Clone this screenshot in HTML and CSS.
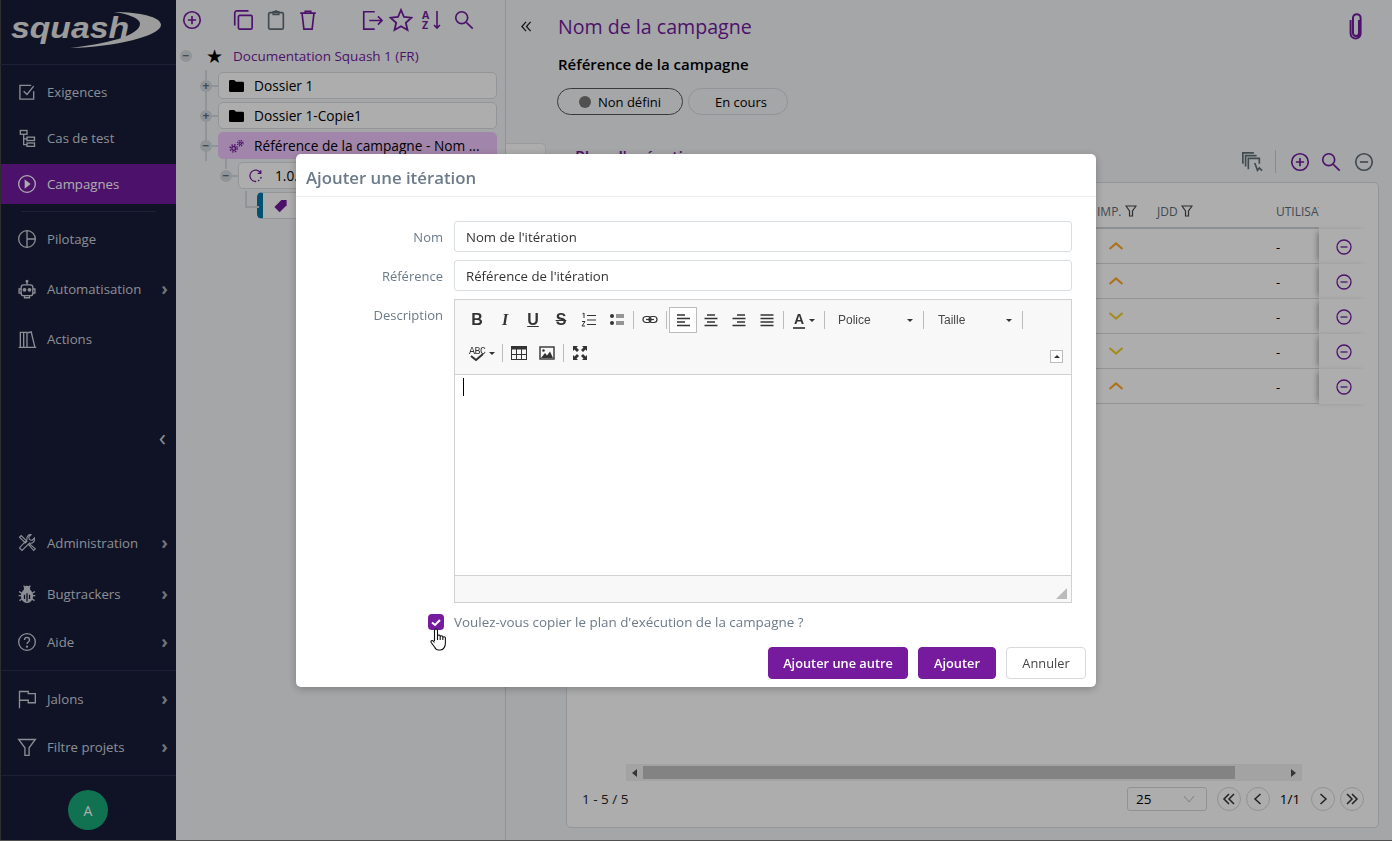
FILE: index.html
```html
<!DOCTYPE html>
<html lang="fr">
  <head>
    <meta charset="UTF-8" />
    <title>Squash - Campagnes</title>
    <meta name="viewport" content="width=device-width, initial-scale=1.0" />
    <link rel="stylesheet" href="styles.css">
  </head>
  <body>
    <div class="app">
      <!-- Main navigation -->
      <aside class="sidebar">
        <div class="logo">
          <svg width="176" height="64" viewBox="0 0 176 64">
            <path d="M114 12C140 12 161 17 161 25C161 36 115 47 70 48C105 44 141 36 140 23C139 18 128 14 114 12Z" fill="#e6e6e6"/>
            <text x="11" y="38" textLength="118" lengthAdjust="spacingAndGlyphs" class="logo-text">squash</text>
          </svg>
        </div>
        <nav class="nav-top">
          <a class="nav-item">
            <svg class="nav-icon" viewBox="0 0 24 24"><path d="M20 11v9.500H3.500V4H17"/><path d="M8 11l4 4 8-10"/></svg>
            <span>Exigences</span>
          </a>
          <a class="nav-item">
            <svg class="nav-icon" viewBox="0 0 24 24"><rect x="4" y="3" width="8" height="4.500"/><rect x="12" y="11" width="9" height="4"/><rect x="12" y="18" width="9" height="4"/><path d="M8 7.500V20h4M8 13h4"/></svg>
            <span>Cas de test</span>
          </a>
          <a class="nav-item active">
            <svg class="nav-icon" viewBox="0 0 24 24"><circle cx="12" cy="12" r="10"/><path d="M10 8l5 4-5 4z" fill="currentColor"/></svg>
            <span>Campagnes</span>
          </a>
          <div class="nav-divider"></div>
          <a class="nav-item wide">
            <svg class="nav-icon" viewBox="0 0 24 24"><circle cx="12" cy="12" r="10"/><path d="M12 2V22M12 12H22"/></svg>
            <span>Pilotage</span>
          </a>
          <a class="nav-item wide">
            <svg class="nav-icon" viewBox="0 0 24 24"><path d="M12 2v5"/><circle cx="12" cy="2.800" r="1"/><rect x="5" y="7" width="14" height="13" rx="3"/><path d="M5 12H2.500v5H5M19 12h2.500v5H19M9 20v2.500h6V20"/><circle cx="9" cy="13" r="1.500" fill="currentColor"/><circle cx="15" cy="13" r="1.500" fill="currentColor"/></svg>
            <span>Automatisation</span>
            <span class="nav-arrow">›</span>
          </a>
          <a class="nav-item wide">
            <svg class="nav-icon" viewBox="0 0 24 24"><path d="M2 22h21M4 22V4h4v18M8 22V4h4v18M13 4.500l4-1 4.500 18.500"/></svg>
            <span>Actions</span>
          </a>
        </nav>
        <div class="nav-spacer"><span class="nav-collapse">‹</span></div>
        <nav class="nav-bottom">
          <a class="nav-item">
            <svg class="nav-icon thin" viewBox="0 0 24 24"><path d="M3 5l2-2 7 7-2 2zM14 14l6 7 2-2-7-6M21 6l-3 3-3-1-1-3 3-3c-3-.5-6 2-5 6L3 18l3 3 9-9c4 1 6.500-2 6-6z"/></svg>
            <span>Administration</span>
            <span class="nav-arrow">›</span>
          </a>
          <a class="nav-item bug-item">
            <svg class="nav-icon" viewBox="0 0 24 24"><path d="M8 2l2 3M16 2l-2 3M2.500 9l3 2M21.500 9l-3 2M2 14h3.500M22 14h-3.500M3 20l3-2M21 20l-3-2"/><path d="M8 8h8c2 2 2.500 4 2.500 6 0 5-3 8-6.500 8s-6.500-3-6.500-8c0-2 .5-4 2.500-6z" fill="currentColor"/><path d="M12 11v10M9 13v5M15 13v5" stroke="#181d38"/><circle cx="12" cy="6" r="3" fill="currentColor"/></svg>
            <span>Bugtrackers</span>
            <span class="nav-arrow">›</span>
          </a>
          <a class="nav-item aide-item">
            <svg class="nav-icon" viewBox="0 0 24 24"><circle cx="12" cy="12" r="10"/><path d="M9 9.500c0-4 6-4 6 0 0 2.500-3 2.500-3 5"/><circle cx="12" cy="17.500" r=".6"/></svg>
            <span>Aide</span>
            <span class="nav-arrow">›</span>
          </a>
          <div class="nav-line"></div>
          <a class="nav-item">
            <svg class="nav-icon" viewBox="0 0 24 24"><path d="M3 23V3h10.500v2.500H22v11h-8.500v-3H3"/></svg>
            <span>Jalons</span>
            <span class="nav-arrow">›</span>
          </a>
          <a class="nav-item">
            <svg class="nav-icon" viewBox="0 0 24 24"><path d="M2 3h20l-7.500 10v9h-5V13z"/></svg>
            <span>Filtre projets</span>
            <span class="nav-arrow">›</span>
          </a>
          <div class="nav-line last"></div>
        </nav>
        <div class="user-box"><div class="avatar">A</div></div>
      </aside>

      <!-- Campaign tree -->
      <section class="tree-panel">
        <div class="tree-toolbar">
          <svg class="tool-icon first" viewBox="0 0 24 24"><circle cx="12" cy="12" r="9"/><path d="M12 7.500v9M7.500 12h9"/></svg>
          <svg class="tool-icon copy" viewBox="0 0 24 24"><rect x="7" y="7" width="15" height="15" rx="1.500"/><path d="M3 18V4.500C3 3 4 2 5.500 2H18"/></svg>
          <svg class="tool-icon gray paste" viewBox="0 0 24 24"><rect x="4" y="4" width="16" height="18" rx="1.500"/><path d="M9 6V3h2a1 1 0 0 1 2 0h2v3z"/></svg>
          <svg class="tool-icon trash" viewBox="0 0 24 24"><path d="M3.500 4.500h17M5.500 4.500L7.500 22h9l2-17.500M9 4.500V2.500h6v2"/></svg>
          <svg class="tool-icon export" viewBox="0 0 24 24"><path d="M15 3H3v19h12M9 12.500h14M18.500 8l4.500 4.500-4.500 4.500"/></svg>
          <svg class="tool-icon star" viewBox="0 0 24 24"><path d="M12 2l3 7 7.500.7-5.700 5 1.700 7.300L12 18.200 5.500 22l1.700-7.300-5.700-5L9 9z"/></svg>
          <div class="sort-icon">
            <span class="sort-letters">A<br>Z</span>
            <svg viewBox="0 0 8 20" width="8" height="20"><path d="M4 1v17M1 15l3 3 3-3"/></svg>
          </div>
          <svg class="tool-icon search" viewBox="0 0 24 24"><circle cx="9.500" cy="9.500" r="6.500"/><path d="M14.500 14.500l7 7"/></svg>
        </div>

        <div class="tree">
          <div class="tree-root">
            <span class="toggle">−</span>
            <span class="root-star">★</span>
            <span class="root-name">Documentation Squash 1 (FR)</span>
          </div>
          <div class="tree-row level-1">
            <span class="toggle">+</span>
            <div class="node">
              <svg class="node-icon" viewBox="0 0 16 14"><path d="M0 2a1.500 1.500 0 0 1 1.500-1.500h4L7.500 2.500h7A1.500 1.500 0 0 1 16 4v8a1.500 1.500 0 0 1-1.500 1.500h-13A1.500 1.500 0 0 1 0 12z" fill="#000"/></svg>
              <span class="node-name">Dossier 1</span>
            </div>
          </div>
          <div class="tree-row level-1">
            <span class="toggle">+</span>
            <div class="node">
              <svg class="node-icon" viewBox="0 0 16 14"><path d="M0 2a1.500 1.500 0 0 1 1.500-1.500h4L7.500 2.500h7A1.500 1.500 0 0 1 16 4v8a1.500 1.500 0 0 1-1.500 1.500h-13A1.500 1.500 0 0 1 0 12z" fill="#000"/></svg>
              <span class="node-name">Dossier 1-Copie1</span>
            </div>
          </div>
          <div class="tree-row level-1">
            <span class="toggle">−</span>
            <div class="node selected">
              <svg class="node-icon" viewBox="0 0 16 14" fill="none" stroke="#711a9d"><circle cx="5" cy="9.500" r="2" stroke-width="1.400"/><circle cx="5" cy="9.500" r="3.800" stroke-dasharray="1.500 1.500" stroke-width="1.600"/><circle cx="12" cy="4" r="1.300" stroke-width="1.200"/><circle cx="12" cy="4" r="2.900" stroke-dasharray="1.200 1.100" stroke-width="1.400"/></svg>
              <span class="node-name">Référence de la campagne - Nom ...</span>
            </div>
          </div>
          <div class="tree-row level-2">
            <span class="toggle">−</span>
            <div class="node">
              <svg class="node-icon iter" viewBox="0 0 16 16" fill="none" stroke="#711a9d" stroke-width="1.500"><path d="M14 5A6.500 6.500 0 1 0 14.500 9" stroke-dasharray="28 2 2 2"/><path d="M14 1.500V5h-3.500"/></svg>
              <span class="node-name">1.0.0 - Itération 1</span>
            </div>
          </div>
          <div class="tree-row level-3">
            <div class="node suite">
              <svg class="node-icon tag" viewBox="0 0 16 16"><path d="M9 1h6v6l-8 8-6-6z" fill="#711a9d"/></svg>
              <span class="node-name">Suite de test</span>
            </div>
          </div>
        </div>
      </section>

      <!-- Campaign content -->
      <main class="main">
        <div class="main-head">
          <svg class="back-arrows" viewBox="0 0 12 12"><path d="M5.500 1L1 6l4.500 5M10.500 1L6 6l4.500 5"/></svg>
          <h1 class="camp-title">Nom de la campagne</h1>
          <svg class="clip-icon" viewBox="0 0 16 28"><path d="M11 8v13a3 3 0 0 1-6 0V6a3.800 3.800 0 0 1 7.600 0v15.500a5 5 0 0 1-10 0V8"/></svg>
        </div>
        <div class="camp-ref">Référence de la campagne</div>
        <div class="pills">
          <span class="pill pill-current"><i class="dot"></i>Non défini</span>
          <span class="pill pill-state">En cours</span>
        </div>

        <div class="plan">
          <div class="plan-tab"></div>
          <div class="plan-body">
            <div class="plan-head">
              <h2 class="plan-title">Plan d'exécution</h2>
              <div class="plan-tools">
                <svg class="plan-icon gray" viewBox="0 0 24 24"><path d="M2 14V2h12M5 17V5h12"/><path d="M8 20V8h12v6M15 13l3 8 2-2.500 3 3"/></svg>
                <span class="plan-sep"></span>
                <svg class="plan-icon plus" viewBox="0 0 24 24"><circle cx="12" cy="12" r="9"/><path d="M12 7.500v9M7.500 12h9"/></svg>
                <svg class="plan-icon find" viewBox="0 0 24 24"><circle cx="9.500" cy="9.500" r="6.500"/><path d="M14.500 14.500l7 7"/></svg>
                <svg class="plan-icon gray minus" viewBox="0 0 24 24"><circle cx="12" cy="12" r="9"/><path d="M7.500 12h9"/></svg>
              </div>
            </div>
            <div class="card">
              <div class="grid">
                <div class="grid-row grid-header">
                  <div class="col-imp">IMP. <svg class="filter" viewBox="0 0 12 12"><path d="M1 1h10L7.500 6v5h-3V6z"/></svg></div>
                  <div class="col-jdd">JDD <svg class="filter" viewBox="0 0 12 12"><path d="M1 1h10L7.500 6v5h-3V6z"/></svg></div>
                  <div class="col-user">UTILISATEUR</div>
                  <div class="col-action head"></div>
                </div>
                <div class="grid-row">
                  <div class="col-imp"><svg class="chev up" viewBox="0 0 16 10"><path d="M1.500 8L8 2.500 14.500 8"/></svg></div>
                  <div class="col-jdd"></div>
                  <div class="col-user">-</div>
                  <div class="col-action"><svg class="remove" viewBox="0 0 16 16"><circle cx="8" cy="8" r="7"/><path d="M4.500 8h7"/></svg></div>
                </div>
                <div class="grid-row">
                  <div class="col-imp"><svg class="chev up" viewBox="0 0 16 10"><path d="M1.500 8L8 2.500 14.500 8"/></svg></div>
                  <div class="col-jdd"></div>
                  <div class="col-user">-</div>
                  <div class="col-action"><svg class="remove" viewBox="0 0 16 16"><circle cx="8" cy="8" r="7"/><path d="M4.500 8h7"/></svg></div>
                </div>
                <div class="grid-row">
                  <div class="col-imp"><svg class="chev down" viewBox="0 0 16 10"><path d="M1.500 2L8 7.500 14.500 2"/></svg></div>
                  <div class="col-jdd"></div>
                  <div class="col-user">-</div>
                  <div class="col-action"><svg class="remove" viewBox="0 0 16 16"><circle cx="8" cy="8" r="7"/><path d="M4.500 8h7"/></svg></div>
                </div>
                <div class="grid-row">
                  <div class="col-imp"><svg class="chev down" viewBox="0 0 16 10"><path d="M1.500 2L8 7.500 14.500 2"/></svg></div>
                  <div class="col-jdd"></div>
                  <div class="col-user">-</div>
                  <div class="col-action"><svg class="remove" viewBox="0 0 16 16"><circle cx="8" cy="8" r="7"/><path d="M4.500 8h7"/></svg></div>
                </div>
                <div class="grid-row">
                  <div class="col-imp"><svg class="chev up" viewBox="0 0 16 10"><path d="M1.500 8L8 2.500 14.500 8"/></svg></div>
                  <div class="col-jdd"></div>
                  <div class="col-user">-</div>
                  <div class="col-action"><svg class="remove" viewBox="0 0 16 16"><circle cx="8" cy="8" r="7"/><path d="M4.500 8h7"/></svg></div>
                </div>
              </div>
              <div class="hscroll">
                <span class="hscroll-left"></span>
                <div class="hscroll-thumb"></div>
                <span class="hscroll-right"></span>
              </div>
              <div class="pager">
                <span class="pager-count">1 - 5 / 5</span>
                <div class="pager-size"><span>25</span><svg viewBox="0 0 12 8" width="12" height="8"><path d="M1 1l5 6 5-6"/></svg></div>
                <span class="pager-btn first-btn"><svg viewBox="0 0 14 14"><path d="M7 2L2 7l5 5M12 2L7 7l5 5"/></svg></span>
                <span class="pager-btn"><svg viewBox="0 0 14 14"><path d="M9.500 2L4 7l5.500 5"/></svg></span>
                <span class="pager-page">1/1</span>
                <span class="pager-btn"><svg viewBox="0 0 14 14"><path d="M4.500 2L10 7l-5.500 5"/></svg></span>
                <span class="pager-btn"><svg viewBox="0 0 14 14"><path d="M2 2l5 5-5 5M7 2l5 5-5 5"/></svg></span>
              </div>
            </div>
          </div>
        </div>
      </main>
    </div>

    <!-- Add iteration dialog -->
    <div class="overlay">
      <div class="dialog">
        <div class="dialog-head">Ajouter une itération</div>
        <div class="dialog-body">
          <div class="form-row">
            <label class="form-label">Nom</label>
            <input class="form-input" type="text" value="Nom de l'itération" />
          </div>
          <div class="form-row">
            <label class="form-label">Référence</label>
            <input class="form-input" type="text" value="Référence de l'itération" />
          </div>
          <div class="form-row">
            <label class="form-label">Description</label>
            <div class="editor">
              <div class="editor-toolbar">
                <div class="tb-row">
                  <span class="tb-btn tb-b">B</span>
                  <span class="tb-btn tb-i">I</span>
                  <span class="tb-btn tb-u">U</span>
                  <span class="tb-btn tb-s">S</span>
                  <span class="tb-btn">
                    <svg class="tb-icon" viewBox="0 0 16 16"><path d="M6 3.500h9M6 8h9M6 12.500h9" stroke-width="1.200"/><path d="M1.500 2l1.500-1v5M1 9.500h3L1 14h3" stroke-width="1"/></svg>
                  </span>
                  <span class="tb-btn">
                    <svg class="tb-icon" viewBox="0 0 16 16"><circle cx="3" cy="4" r="2" fill="#333" stroke="none"/><circle cx="3" cy="11" r="2" fill="#333" stroke="none"/><path d="M7 3h8M7 5h8M7 10h8M7 12h8" stroke-width="1.200"/></svg>
                  </span>
                  <span class="tb-sep"></span>
                  <span class="tb-btn">
                    <svg class="tb-icon" viewBox="0 0 16 16"><rect x="1" y="4.500" width="8" height="6" rx="3" stroke-width="1.200"/><rect x="7" y="4.500" width="8" height="6" rx="3" stroke-width="1.200"/><path d="M4 7.500h8" stroke-width="1.200"/></svg>
                  </span>
                  <span class="tb-sep"></span>
                  <span class="tb-btn tb-on">
                    <svg class="tb-icon" viewBox="0 0 16 16"><path d="M2 3h8M2 6.500h13M2 10h8M2 13.500h13" stroke-width="1.700"/></svg>
                  </span>
                  <span class="tb-btn">
                    <svg class="tb-icon" viewBox="0 0 16 16"><path d="M4 3h8M1.500 6.500h13M4 10h8M1.500 13.500h13" stroke-width="1.700"/></svg>
                  </span>
                  <span class="tb-btn">
                    <svg class="tb-icon" viewBox="0 0 16 16"><path d="M6 3h8M1.500 6.500h13M6 10h8M1.500 13.500h13" stroke-width="1.700"/></svg>
                  </span>
                  <span class="tb-btn">
                    <svg class="tb-icon" viewBox="0 0 16 16"><path d="M1.500 3h13M1.500 6.500h13M1.500 10h13M1.500 13.500h13" stroke-width="1.700"/></svg>
                  </span>
                  <span class="tb-sep"></span>
                  <span class="tb-color"><span class="tb-a">A</span><i class="caret"></i></span>
                  <span class="tb-sep tb-sep-wide"></span>
                  <span class="tb-combo"><span>Police</span><i class="caret"></i></span>
                  <span class="tb-sep"></span>
                  <span class="tb-combo tb-combo-size"><span>Taille</span><i class="caret"></i></span>
                  <span class="tb-sep"></span>
                </div>
                <div class="tb-row">
                  <span class="tb-spell"><span class="tb-abc">ABC</span><i class="caret"></i>
                    <svg class="tb-check" viewBox="0 0 14 8"><path d="M1 3l5 4 7-6"/></svg>
                  </span>
                  <span class="tb-sep"></span>
                  <span class="tb-btn">
                    <svg class="tb-icon" viewBox="0 0 16 16"><rect x=".5" y="1.500" width="15" height="13" stroke-width="1"/><path d="M.5 3h15" stroke-width="3"/><path d="M.5 9.500h15M5.500 4v10M10.500 4v10" stroke-width="1"/></svg>
                  </span>
                  <span class="tb-btn">
                    <svg class="tb-icon" viewBox="0 0 16 16"><rect x="1" y="2" width="14" height="12" stroke-width="1.400"/><circle cx="4.500" cy="5.500" r="1.300" fill="#333" stroke="none"/><path d="M2 13l4-5 2 2.500 3-4 3 6.500z" fill="#333" stroke="none"/></svg>
                  </span>
                  <span class="tb-sep"></span>
                  <span class="tb-btn">
                    <svg class="tb-icon" viewBox="0 0 16 16"><path d="M1 1h5L4.500 2.500 7 5 5 7 2.500 4.500 1 6zM15 1v5l-1.500-1.500L11 7 9 5l2.500-2.500L10 1zM1 15v-5l1.500 1.500L5 9l2 2-2.500 2.500L6 15zM15 15h-5l1.500-1.500L9 11l2-2 2.500 2.500L15 10z" fill="#333" stroke="none"/></svg>
                  </span>
                  <span class="tb-collapse"></span>
                </div>
              </div>
              <div class="editor-content"><span class="text-caret"></span></div>
              <div class="editor-bottom">
                <svg class="resize-grip" viewBox="0 0 11 11" width="11" height="11"><path d="M11 0v11H0z" fill="#bbb"/></svg>
              </div>
            </div>
          </div>
          <div class="form-row check-row">
            <div class="check-cell">
              <span class="checkbox"><svg viewBox="0 0 16 16" width="16" height="16"><path d="M4 8.500l3 2.500 5-5" fill="none" stroke="#fff" stroke-width="2"/></svg></span>
              <svg class="hand" viewBox="0 0 18 23" width="18" height="23"><path d="M4.500 13V2.500a1.500 1.500 0 0 1 3 0V8a1.400 1.400 0 0 1 2.700 0v1a1.300 1.300 0 0 1 2.600 0v1a1.300 1.300 0 0 1 2.600 0v5c0 3-1.500 7-5 7H8.500c-2 0-3-1-4-3L1.200 14.500c-.8-1.500 1-2.500 2-1.500l1.300 1.500M7.500 8v4M10.200 9v3M12.800 10v2"/></svg>
            </div>
            <span class="check-label">Voulez-vous copier le plan d'exécution de la campagne ?</span>
          </div>
        </div>
        <div class="dialog-foot">
          <button class="btn btn-primary btn-other">Ajouter une autre</button>
          <button class="btn btn-primary">Ajouter</button>
          <button class="btn btn-plain">Annuler</button>
        </div>
      </div>
    </div>
  </body>
</html>
```

FILE: styles.css
```css
* {
  box-sizing: border-box;
}

html,
body {
  margin: 0;
  height: 100%;
  overflow: hidden;
}

body {
  font-family: "Open Sans", "Noto Sans", sans-serif;
  font-size: 13px;
  background: #f4f5f7;
  color: #000;
}

.app {
  display: flex;
  height: 841px;
  border-bottom: 1px solid #777;
}

/* sidebar */
.sidebar {
  width: 176px;
  flex: none;
  display: flex;
  flex-direction: column;
  background: #181d38;
  border-left: 1px solid #444;
  color: #ced1dc;
}

.logo {
  height: 65px;
  margin-left: -1px;
  border-bottom: 1px solid #2c3150;
}

.logo-text {
  font-family: "Liberation Sans", sans-serif;
  font-size: 29px;
  font-weight: bold;
  font-style: italic;
  fill: #e6e6e6;
}

.nav-top {
  padding-top: 7px;
}

.nav-item {
  height: 40px;
  display: flex;
  align-items: center;
  padding-left: 16px;
  margin-bottom: 6px;
  font-size: 13.200px;
}

.nav-item.wide {
  margin-bottom: 10px;
}

.nav-item.active {
  background: #711a9d;
  color: #fff;
  margin-bottom: 0;
}

.nav-icon {
  width: 20px;
  height: 20px;
  margin-right: 10px;
  flex: none;
  fill: none;
  stroke: currentColor;
  stroke-width: 1.600;
}

.nav-icon.thin {
  stroke-width: 1.300;
}

.nav-arrow {
  margin-left: auto;
  margin-right: 8px;
  font-size: 18px;
  font-weight: bold;
  line-height: 18px;
  padding-bottom: 3px;
  color: #a9acb6;
}

.nav-divider {
  height: 1px;
  margin: 7px 20px;
  background: #2c3150;
}

.nav-spacer {
  flex: 1;
  display: flex;
  align-items: center;
  justify-content: flex-end;
  padding: 0 10px 18px 0;
}

.nav-collapse {
  font-size: 24px;
  line-height: 24px;
}

.nav-bottom .nav-item {
  margin-bottom: 8px;
}

.nav-bottom .nav-item.bug-item {
  margin-top: 11px;
}

.nav-line {
  height: 1px;
  background: #2c3150;
  margin-bottom: 8px;
}

.nav-line.last {
  margin-bottom: 0;
}

.user-box {
  height: 64px;
  padding-top: 14px;
  display: flex;
  justify-content: center;
  margin-left: -1px;
}

.avatar {
  width: 40px;
  height: 40px;
  border-radius: 50%;
  background: #18a878;
  color: #fff;
  font-size: 14px;
  display: flex;
  align-items: center;
  justify-content: center;
}

/* tree */
.tree-panel {
  width: 330px;
  flex: none;
  border-right: 1px solid #d4d8dc;
}

.tree-toolbar {
  height: 40px;
  display: flex;
  align-items: center;
  color: #711a9d;
}

.tool-icon {
  width: 22px;
  height: 22px;
  fill: none;
  stroke: #711a9d;
  stroke-width: 1.800;
  flex: none;
}

.tool-icon.gray {
  stroke: #5f6d78;
}

.tool-icon.first {
  margin-left: 5px;
}

.tool-icon.copy {
  margin-left: 29px;
}

.tool-icon.paste {
  margin-left: 11px;
}

.tool-icon.trash {
  margin-left: 10px;
}

.tool-icon.export {
  margin-left: 42px;
}

.tool-icon.star {
  margin-left: 6px;
  width: 24px;
  height: 24px;
}

.tool-icon.search {
  margin-left: 11px;
}

.sort-icon {
  margin-left: 9px;
  width: 20px;
  display: flex;
  align-items: center;
}

.sort-letters {
  font-size: 10.500px;
  font-weight: 700;
  line-height: 10px;
  width: 11px;
}

.sort-icon svg {
  fill: none;
  stroke: #711a9d;
  stroke-width: 1.600;
}

.tree-root {
  height: 30px;
  margin-top: 1px;
  display: flex;
  align-items: center;
  padding-left: 4px;
}

.toggle {
  width: 12px;
  height: 12px;
  border-radius: 50%;
  background: #d4dade;
  color: #5f6d78;
  font-size: 12px;
  font-weight: 700;
  line-height: 12px;
  text-align: center;
  flex: none;
}

.root-star {
  margin-left: 14px;
  width: 18px;
  font-size: 19px;
  line-height: 19px;
  font-family: "DejaVu Sans", sans-serif;
}

.root-name {
  margin-left: 9px;
  color: #711a9d;
  font-size: 13.500px;
  font-weight: 500;
}

.tree-row {
  position: relative;
  height: 30px;
  display: flex;
  align-items: center;
}

.tree-row .toggle {
  position: relative;
}

.level-1 {
  padding-left: 24px;
}

.level-2 {
  padding-left: 44px;
}

.level-3 {
  padding-left: 81px;
}

.level-1::before {
  content: "";
  position: absolute;
  left: 29px;
  top: -1px;
  height: 31px;
  width: 2px;
  background: #d4dade;
}

.level-1 .toggle::after,
.level-2 .toggle::after {
  content: "";
  position: absolute;
  left: 12px;
  top: 5px;
  width: 6px;
  height: 2px;
  background: #d4dade;
}

.level-2::before {
  content: "";
  position: absolute;
  left: 49px;
  top: -2px;
  height: 10px;
  width: 2px;
  background: #d4dade;
}

.level-3::before {
  content: "";
  position: absolute;
  left: 69px;
  top: 0;
  height: 15px;
  width: 12px;
  border-left: 2px solid #d4dade;
  border-bottom: 2px solid #d4dade;
}

.node {
  height: 27px;
  width: 279px;
  margin: 0 0 2px 6px;
  display: flex;
  align-items: center;
  background: #fff;
  border: 1px solid #d9dee2;
  border-radius: 5px;
  padding: 1px 0 0 10px;
  flex: none;
}

.level-2 .node,
.level-3 .node {
  width: 260px;
}

.level-3 .node {
  margin-left: 0;
}

.node.selected {
  background: #eec5fb;
  border-color: #eec5fb;
}

.node.suite {
  border-left: 6px solid #0078a8;
  padding-left: 10px;
}

.node-icon {
  width: 15px;
  height: 14px;
  flex: none;
  margin-right: 10px;
}

.node-icon.iter {
  margin-left: -1px;
  margin-right: 12px;
}

.node-name {
  font-size: 13.700px;
  font-weight: 500;
  white-space: nowrap;
}

/* main content */
.main {
  flex: 1;
  min-width: 0;
  display: flex;
  flex-direction: column;
}

.main-head {
  height: 54px;
  display: flex;
  align-items: center;
  padding: 0 0 2px 15px;
}

.back-arrows {
  width: 11px;
  height: 11px;
  margin-right: 26px;
  fill: none;
  stroke: #222;
  stroke-width: 1.400;
}

.camp-title {
  margin: 0;
  font-size: 19.600px;
  font-weight: 500;
  color: #711a9d;
}

.clip-icon {
  width: 18px;
  height: 28px;
  margin-left: auto;
  margin-right: 27px;
  fill: none;
  stroke: #711a9d;
  stroke-width: 2;
}

.camp-ref {
  margin-left: 52px;
  font-size: 15px;
  font-weight: 600;
  line-height: 20px;
}

.pills {
  display: flex;
  gap: 5px;
  margin: 14px 0 0 51px;
}

.pill {
  height: 27px;
  width: 100px;
  justify-content: center;
  border: 1px solid #d4dade;
  border-radius: 14px;
  display: flex;
  align-items: center;
  font-size: 13px;
}

.pill-state {
  padding-left: 6px;
}

.pill-current {
  width: 126px;
  border-color: #555;
}

.dot {
  width: 12px;
  height: 12px;
  border-radius: 50%;
  background: #777;
  margin-right: 7px;
}

.plan {
  flex: 1;
  min-height: 0;
  display: flex;
  margin-top: 28px;
}

.plan-tab {
  width: 40px;
  height: 40px;
  flex: none;
  background: #fff;
  border: 1px solid #e2e5e8;
  border-left: 0;
  border-radius: 0 5px 5px 0;
}

.plan-body {
  flex: 1;
  min-width: 0;
  display: flex;
  flex-direction: column;
  padding: 0 13px 12px 20px;
}

.plan-head {
  height: 39px;
  display: flex;
  align-items: flex-end;
  padding-left: 9px;
}

.plan-title {
  margin: 0;
  align-self: flex-start;
  color: #711a9d;
  font-size: 16px;
  font-weight: 600;
  line-height: 28px;
}

.plan-tools {
  margin-left: auto;
  display: flex;
  align-items: center;
  height: 38px;
  padding-bottom: 3px;
}

.plan-icon {
  width: 22px;
  height: 22px;
  fill: none;
  stroke: #711a9d;
  stroke-width: 1.800;
  flex: none;
}

.plan-icon.gray {
  stroke: #5f6d78;
}

.plan-sep {
  width: 1px;
  height: 23px;
  background: #c8ced3;
  margin: 0 13px 0 12px;
}

.plan-icon.find {
  margin-left: 9px;
}

.plan-icon.minus {
  margin-left: 11px;
  margin-right: 4px;
}

.card {
  flex: 1;
  min-height: 0;
  display: flex;
  flex-direction: column;
  background: #fff;
  border: 1px solid #d9dee2;
  border-radius: 5px;
  padding: 12px 9px 0;
}

.grid {
  flex: 1;
  overflow: hidden;
}

.grid-row {
  height: 35px;
  display: flex;
  justify-content: flex-end;
  align-items: center;
  border-bottom: 1px solid #d4dade;
}

.grid-header {
  height: 34px;
  border-bottom: 2px solid #cdd3d8;
  color: #5f6d78;
  font-size: 12px;
  font-weight: 400;
}

.col-imp {
  width: 60px;
  text-align: left;
  display: flex;
  align-items: center;
  gap: 3px;
  white-space: nowrap;
}

.grid-row .col-imp .chev {
  margin: 0 0 0 11px;
}

.col-jdd {
  width: 119px;
  display: flex;
  align-items: center;
  gap: 3px;
}

.col-user {
  width: 43px;
  overflow: hidden;
  white-space: nowrap;
  font-size: 13px;
  padding-top: 2px;
}

.grid-header .col-user {
  font-size: 12px;
  padding-top: 0;
}

.col-action {
  width: 50px;
  height: 35px;
  flex: none;
  display: flex;
  align-items: center;
  justify-content: center;
  box-shadow: -4px 0 6px -3px rgba(0, 0, 0, 0.4);
  background: #fff;
}

.col-action svg {
  margin-top: 2px;
}

.col-action.head {
  box-shadow: none;
}

.filter {
  width: 12px;
  height: 12px;
  fill: none;
  stroke: #444;
  stroke-width: 1.200;
}

.chev {
  width: 16px;
  height: 10px;
  fill: none;
  stroke-width: 2.200;
}

.chev.up {
  stroke: #ffa92c;
}

.chev.down {
  stroke: #f5cf2e;
}

.remove {
  width: 16px;
  height: 16px;
  fill: none;
  stroke: #711a9d;
  stroke-width: 1.300;
}

.hscroll {
  width: 676px;
  height: 17px;
  flex: none;
  margin-left: 50px;
  display: flex;
  align-items: center;
  background: #f1f1f1;
  position: relative;
}

.hscroll-left {
  width: 17px;
  display: flex;
  justify-content: center;
}

.hscroll-left::before {
  content: "";
  border: 4px solid transparent;
  border-right: 5px solid #505050;
  border-left: 0;
}

.hscroll-thumb {
  width: 592px;
  height: 13px;
  background: #c1c1c1;
}

.hscroll-right {
  margin-left: auto;
  width: 17px;
  display: flex;
  justify-content: center;
}

.hscroll-right::before {
  content: "";
  border: 4px solid transparent;
  border-left: 5px solid #505050;
  border-right: 0;
}

.pager {
  height: 46px;
  flex: none;
  display: flex;
  align-items: flex-start;
  padding: 6px 5px 0 6px;
  font-size: 13.500px;
}

.pager-count {
  line-height: 24px;
  color: #222;
}

.pager-size {
  margin-left: auto;
  width: 80px;
  height: 24px;
  border: 1px solid #d4d8dc;
  border-radius: 3px;
  display: flex;
  align-items: center;
  justify-content: space-between;
  padding: 0 11px 0 8px;
}

.pager-size svg {
  fill: none;
  stroke: #bbb;
  stroke-width: 1;
}

.pager-btn {
  width: 24px;
  height: 24px;
  margin-left: 5px;
  border: 1px solid #d4d8dc;
  border-radius: 50%;
  display: flex;
  align-items: center;
  justify-content: center;
}

.pager-btn.first-btn {
  margin-left: 10px;
}

.pager-btn svg {
  width: 14px;
  height: 14px;
  fill: none;
  stroke: #333;
  stroke-width: 1.500;
}

.pager-page {
  width: 34px;
  text-align: center;
  line-height: 24px;
  margin-left: 3px;
  margin-right: -1px;
}

/* dialog */
.overlay {
  position: fixed;
  top: 0;
  left: 0;
  right: 0;
  bottom: 0;
  display: flex;
  align-items: center;
  justify-content: center;
  background: rgba(0, 0, 0, 0.32);
}

.dialog {
  width: 800px;
  height: 533px;
  background: #fff;
  border-radius: 5px;
  box-shadow: 0 2px 8px rgba(0, 0, 0, 0.25);
  display: flex;
  flex-direction: column;
}

.dialog-head {
  height: 43px;
  flex: none;
  padding-left: 10px;
  line-height: 48px;
  border-bottom: 1px solid #ebedef;
  color: #6c7a89;
  font-size: 16.800px;
  font-weight: 600;
}

.dialog-body {
  flex: 1;
  padding: 24px 24px 0 0;
}

.form-row {
  display: flex;
  margin-bottom: 8px;
}

.form-label {
  width: 147px;
  height: 31px;
  flex: none;
  padding-top: 1px;
  text-align: right;
  color: #6c7a89;
  font-size: 13px;
  line-height: 31px;
  margin-right: 11px;
}

.form-input {
  flex: 1;
  height: 31px;
  border: 1px solid #d9dee2;
  border-radius: 3px;
  padding: 0 11px;
  font-family: inherit;
  font-size: 13.200px;
  color: #333;
}

.editor {
  flex: 1;
  height: 304px;
  border: 1px solid #d1d1d1;
  display: flex;
  flex-direction: column;
}

.editor-toolbar {
  height: 75px;
  flex: none;
  background: #f8f8f8;
  border-bottom: 1px solid #d1d1d1;
  padding: 7px 8px 0;
}

.tb-row {
  display: flex;
  align-items: center;
  height: 26px;
  margin-bottom: 7px;
  color: #333;
}

.tb-btn {
  width: 28px;
  height: 26px;
  flex: none;
  display: flex;
  align-items: center;
  justify-content: center;
  font-size: 16px;
  border: 1px solid transparent;
}

.tb-on {
  background: #fff;
  border-color: #bcbcbc;
}

.tb-b {
  font-family: "Liberation Sans", sans-serif;
  font-weight: bold;
}

.tb-i {
  font-family: "Liberation Serif", serif;
  font-style: italic;
  font-weight: bold;
}

.tb-u {
  font-family: "Liberation Sans", sans-serif;
  font-weight: bold;
  text-decoration: underline;
}

.tb-s {
  font-family: "Liberation Sans", sans-serif;
  font-weight: bold;
  text-decoration: line-through;
}

.tb-icon {
  width: 16px;
  height: 16px;
  fill: none;
  stroke: #333;
}

.tb-sep {
  width: 1px;
  height: 18px;
  margin: 0 2px;
  background: #bcbcbc;
  flex: none;
}

.tb-sep-wide {
  margin-right: 2px;
}

.tb-color {
  width: 36px;
  display: flex;
  align-items: center;
  justify-content: center;
  flex: none;
  gap: 4px;
}

.tb-a {
  font-family: "Liberation Sans", sans-serif;
  font-weight: bold;
  font-size: 14px;
  line-height: 15px;
  border-bottom: 2px solid #555;
  padding: 0 1px;
}

.caret {
  width: 0;
  height: 0;
  border: 3px solid transparent;
  border-top: 3px solid #333;
  border-bottom: 0;
  flex: none;
}

.tb-combo {
  width: 94px;
  flex: none;
  display: flex;
  align-items: center;
  justify-content: space-between;
  padding: 0 8px 0 11px;
  font-family: "Liberation Sans", sans-serif;
  font-size: 12px;
  color: #484848;
}

.tb-combo-size {
  padding-left: 12px;
}

.tb-spell {
  width: 37px;
  flex: none;
  display: flex;
  align-items: center;
  gap: 3px;
  padding-left: 6px;
  position: relative;
  height: 26px;
}

.tb-abc {
  font-family: "Liberation Mono", monospace;
  font-size: 10px;
  width: 17px;
  letter-spacing: -0.5px;
  margin-top: -4px;
}

.tb-check {
  position: absolute;
  left: 7px;
  top: 13px;
  width: 14px;
  height: 8px;
  fill: none;
  stroke: #333;
  stroke-width: 2;
}

.tb-collapse {
  margin-left: auto;
  width: 13px;
  height: 13px;
  border: 1px solid #bcbcbc;
  background: #fff;
  display: flex;
  align-items: center;
  justify-content: center;
  margin-top: 7px;
}

.tb-collapse::before {
  content: "";
  border: 3px solid transparent;
  border-bottom: 3px solid #333;
  border-top: 0;
}

.editor-content {
  flex: 1;
  padding: 3px 8px;
}

.text-caret {
  display: block;
  width: 1px;
  height: 18px;
  background: #000;
}

.editor-bottom {
  height: 27px;
  flex: none;
  background: #f8f8f8;
  border-top: 1px solid #d1d1d1;
  display: flex;
  align-items: flex-end;
  justify-content: flex-end;
  padding: 0 4px 3px 0;
}

.check-row {
  margin-top: 9px;
  margin-bottom: 0;
  height: 20px;
  align-items: center;
}

.check-cell {
  width: 148px;
  flex: none;
  position: relative;
  height: 16px;
  margin-right: 10px;
}

.checkbox {
  position: absolute;
  right: 0;
  top: 0;
  width: 16px;
  height: 16px;
  border-radius: 4px;
  background: #761a9e;
}

.hand {
  position: absolute;
  left: 134px;
  top: 14px;
  fill: #fff;
  stroke: #111;
  stroke-width: 1.100;
}

.check-label {
  color: #6c7a89;
  font-size: 13.400px;
}

.dialog-foot {
  height: 40px;
  flex: none;
  display: flex;
  justify-content: flex-end;
  gap: 10px;
  padding-right: 10px;
}

.btn {
  height: 32px;
  border-radius: 4px;
  font-family: inherit;
  font-size: 12.800px;
  padding: 0;
}

.btn-primary {
  background: #761a9e;
  border: 1px solid #761a9e;
  color: #fff;
  font-weight: 600;
  width: 78px;
}

.btn-primary.btn-other {
  width: 140px;
}

.btn-plain {
  width: 80px;
  background: #fff;
  border: 1px solid #d9d9d9;
  color: #444;
}
```
